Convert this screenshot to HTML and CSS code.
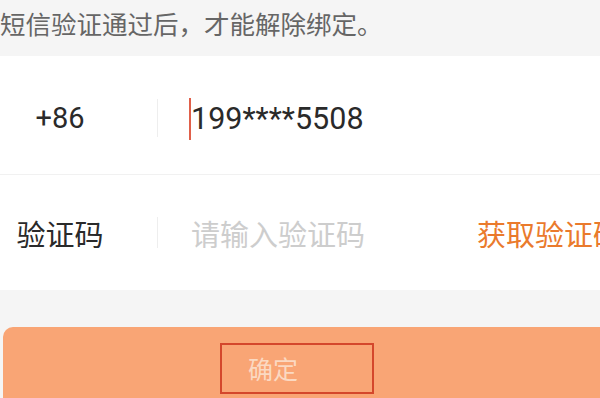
FILE: index.html
```html
<!DOCTYPE html>
<html lang="zh-CN">
<head>
    <meta charset="UTF-8">
    <meta name="viewport" content="width=device-width, initial-scale=1.0">
    <title>解除绑定</title>
    <link rel="stylesheet" href="styles.css">
</head>
<body>
    <p class="hint">短信验证通过后，才能解除绑定。</p>

    <div class="card">
        <div class="row">
            <span class="label">+86</span>
            <span class="divider"></span>
            <span class="value digits"><i class="cursor"></i>199****5508</span>
        </div>
        <div class="row">
            <span class="label">验证码</span>
            <span class="divider"></span>
            <span class="value placeholder">请输入验证码</span>
            <span class="get-code">获取验证码</span>
        </div>
    </div>

    <div class="submit">
        <span class="submit-text">确定</span>
        <span class="mark"></span>
    </div>
</body>
</html>
```

FILE: styles.css
```css
body {
    margin: 0;
    padding: 0;
    background-color: #f5f5f5;
    font-family: Roboto, "Noto Sans CJK SC", sans-serif;
    overflow: hidden;
    white-space: nowrap;
}

.hint {
    margin: 0;
    height: 56px;
    line-height: 50px;
    font-size: 25.5px;
    color: #666;
}

.card {
    background-color: #fff;
}

.row {
    display: flex;
    align-items: center;
    box-sizing: border-box;
    height: 118px;
    padding-top: 6px;
}

.row + .row {
    height: 116px;
    padding-top: 0;
    border-top: 1px solid #f1f1f1;
}

.row > span {
    flex-shrink: 0;
}

.label {
    width: 120px;
    text-align: center;
    font-size: 29px;
    color: #2a2a2a;
    margin-right: 37px;
}

.divider {
    width: 1px;
    height: 38px;
    background-color: #eeeeee;
}

.row + .row .divider {
    height: 31px;
}

.value {
    position: relative;
    margin-left: 33px;
    width: 286px;
    font-size: 29px;
    color: #2a2a2a;
}

.digits {
    font-size: 30.5px;
}

.cursor {
    position: absolute;
    left: -2px;
    top: -3px;
    width: 2px;
    height: 42px;
    background-color: #e0604a;
}

.placeholder {
    color: #cdcdcd;
}

.get-code {
    font-size: 29px;
    color: #ea7a2c;
}

.submit {
    position: relative;
    margin: 37px -30px 0 3px;
    height: 100px;
    background-color: #f9a575;
    border-radius: 10px;
}

.submit-text {
    display: block;
    padding: 23px 0 0 245px;
    font-size: 25px;
    color: #fbd9c2;
}

.mark {
    position: absolute;
    left: 217px;
    top: 16px;
    width: 150px;
    height: 47px;
    border: 2px solid #d4472c;
}
```
